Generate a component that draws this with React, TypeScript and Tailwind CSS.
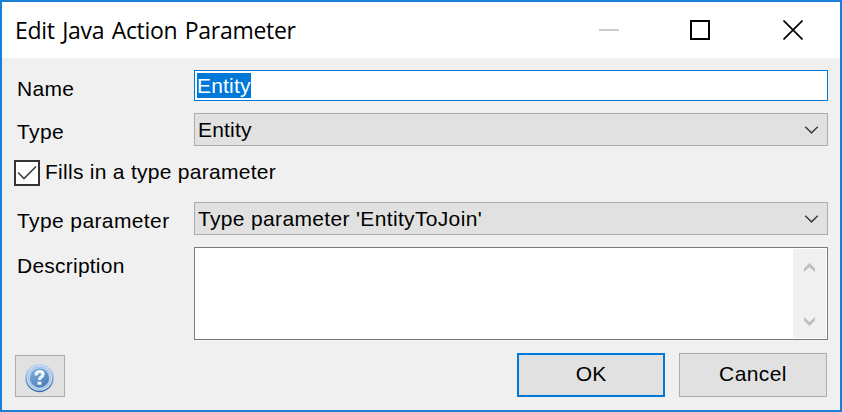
import type { ReactNode } from 'react';

function Row({ label, className, tracking, children }: { label: string; className: string; tracking: string; children: ReactNode }) {
  return (
    <div className={`flex items-start ${className}`}>
      <div className={`w-[180px] shrink-0 pl-[3px] pt-[7px] leading-6 whitespace-nowrap ${tracking}`}>{label}</div>
      {children}
    </div>
  );
}

function Select({ value, tracking }: { value: string; tracking: string }) {
  return (
    <div className="flex h-[33px] w-[634px] items-center justify-between border border-[#adadad] bg-[#e1e1e1] pr-[8px] pl-[3px]">
      <span className={`leading-6 ${tracking}`}>{value}</span>
      <svg width="15" height="9" viewBox="0 0 15 9" fill="none" stroke="#404040" strokeWidth="1.5">
        <path d="M1.2 1.7 7.5 7.9 13.8 1.7" />
      </svg>
    </div>
  );
}

function HelpIcon() {
  return (
    <svg width="30" height="30" viewBox="0 0 30 30">
      <defs>
        <linearGradient id="ring" x1="0" y1="0" x2="0" y2="1">
          <stop offset="0" stopColor="#c3d9f5" />
          <stop offset="0.5" stopColor="#84acd9" />
          <stop offset="1" stopColor="#3c6aaa" />
        </linearGradient>
        <linearGradient id="disc" x1="0" y1="0" x2="0.7" y2="1">
          <stop offset="0" stopColor="#82b0dc" />
          <stop offset="1" stopColor="#4b7db8" />
        </linearGradient>
      </defs>
      <circle cx="14.5" cy="15" r="14.2" fill="url(#ring)" />
      <circle cx="14.5" cy="15" r="12.6" fill="#d3e3f6" />
      <circle cx="14.5" cy="15" r="11.4" fill="#8cb1dc" />
      <circle cx="14.5" cy="15" r="10.7" fill="#c3d8f0" />
      <circle cx="14.5" cy="15" r="9.7" fill="url(#disc)" />
      <path d="M11.2 12.6V10.6Q12 8.6 14.7 8.6Q18 8.6 18 11.2Q18 13 16 14.2Q14.5 15.1 14.5 17" fill="none" stroke="#eff6fd" strokeWidth="3.2" />
      <path d="M12.5 18.7h4v3h-4z" fill="#eff6fd" />
    </svg>
  );
}

export default function App() {
  return (
    <div className="flex h-[412px] w-[842px] flex-col border-2 border-[#1a80d6] bg-[#f0f0f0] font-['Liberation_Sans',Arial,sans-serif] text-[21px] text-black">
      <header className="flex h-14 shrink-0 items-center bg-white pl-[13px]">
        <h1 className="w-[584px] pb-px font-['Open_Sans','Noto_Sans',sans-serif] text-[23px] leading-7 tracking-[-0.3px] [word-spacing:1.8px]">Edit Java Action Parameter</h1>
        <div className="h-[2px] w-5 bg-[#cccccc]" />
        <div className="ml-[71px] h-5 w-5 border-2 border-black" />
        <svg className="ml-[73px]" width="20" height="20" viewBox="0 0 20 20" fill="none" stroke="black" strokeWidth="1.7">
          <path d="M.5.5l19 19M19.5.5l-19 19" />
        </svg>
      </header>
      <main className="flex flex-col pt-3 pl-3">
        <Row label="Name" className="h-[43px]" tracking="tracking-[0.33px]">
          <div className="flex h-[31px] w-[634px] items-center border border-[#0078d7] bg-white pl-[2px]">
            <span className="h-[25px] w-[54px] bg-[#0078d7] leading-[26px] tracking-[0.2px] text-white">Entity</span>
          </div>
        </Row>
        <Row label="Type" className="h-[47px]" tracking="tracking-[0.4px]">
          <Select value="Entity" tracking="tracking-[0.2px]" />
        </Row>
        <div className="flex h-[42px] items-start">
          <div className="flex h-[26px] w-[26px] items-center justify-center border-2 border-[#333333] bg-white">
            <svg width="20" height="16" viewBox="0 0 20 16" fill="none" stroke="#404040" strokeWidth="1.6">
              <path d="M1 7.5 7 13.5 19 1.5" />
            </svg>
          </div>
          <span className="pl-[5px] leading-6 tracking-[0.28px]">Fills in a type parameter</span>
        </div>
        <Row label="Type parameter" className="h-[45px]" tracking="tracking-[0.39px]">
          <Select value="Type parameter 'EntityToJoin'" tracking="tracking-[0.34px]" />
        </Row>
        <Row label="Description" className="h-[106px]" tracking="tracking-[0.23px]">
          <div className="flex h-[93px] w-[634px] justify-end border border-[#7a7a7a] bg-white p-px">
            <div className="flex w-[33px] flex-col items-center justify-between bg-[#f0f0f0] pt-[14px] pb-[12px]">
              <svg width="11" height="9" viewBox="0 0 11 9" fill="#bfbfbf"><path d="M5.5 0 11 5.5V9L5.5 3.9 0 9V5.5z" /></svg>
              <svg width="11" height="9" viewBox="0 0 11 9" fill="#bfbfbf"><path d="M5.5 9 11 3.5V0L5.5 5.1 0 0V3.5z" /></svg>
            </div>
          </div>
        </Row>
        <footer className="flex items-end pl-px">
          <button className="flex h-[42px] w-[50px] items-center justify-center border border-[#adadad] bg-[#e1e1e1] pt-[4px]"><HelpIcon /></button>
          <button className="ml-[452px] h-11 w-[148px] border-2 border-[#0078d7] bg-[#e1e1e1] pb-[2px]">OK</button>
          <button className="ml-[14px] h-11 w-[148px] border border-[#adadad] bg-[#e1e1e1] pb-[2px] tracking-[0.4px]">Cancel</button>
        </footer>
      </main>
    </div>
  );
}
